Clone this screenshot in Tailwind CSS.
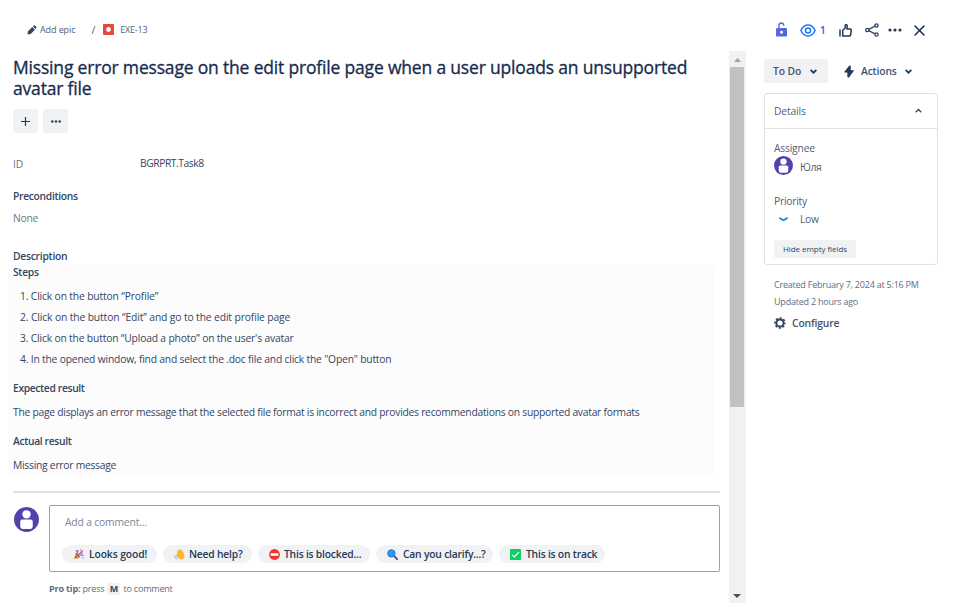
<!DOCTYPE html>
<html lang="en">
<head>
<meta charset="utf-8">
<title>EXE-13</title>
<script src="https://cdn.jsdelivr.net/npm/@tailwindcss/browser@4"></script>
</head>
<body class="bg-white overflow-hidden">
<div class="flex w-[953px] h-[603px] overflow-hidden font-['Open_Sans','Noto_Sans',sans-serif] text-[10.3px] tracking-[-0.25px] leading-4 text-[#344563] whitespace-nowrap">
  <main class="w-[729px] shrink-0 flex flex-col">
    <nav class="h-[50px] pt-[22px] pl-[27px] flex text-[9px] tracking-[-0.1px] text-[#505f79]">
      <svg class="w-[10px] h-[10px] mt-[3px] mr-[3px]" viewBox="0 0 10 10" fill="#344563"><path d="M1 6.2 5.2 2 7.9 4.7 3.7 8.9.5 9.5zM5.9 1.4 7 .5q.5-.4 1 .1l1.2 1.2q.5.5.1 1l-.8 1.2z"/></svg>
      <span>Add epic</span>
      <span class="ml-4 text-[10.5px]">/</span>
      <svg class="w-[11px] h-[11px] ml-[8px] mt-[2px] mr-[6px]" viewBox="0 0 11 11"><rect width="11" height="11" rx="1" fill="#e5493a"/><circle cx="5.5" cy="5.5" r="2.4" fill="#fff"/></svg>
      <span class="tracking-[-0.2px]">EXE-13</span>
    </nav>
    <h1 class="mt-[7px] pl-[13px] text-[17.5px] leading-[21px] tracking-[-0.18px] text-[#172b4d] [-webkit-text-stroke:0.3px_#172b4d]">Missing error message on the edit profile page when a user uploads an unsupported<br>avatar file</h1>
    <div class="flex gap-[5px] pl-[13px] mt-[10px]">
      <button class="w-[25px] h-6 rounded-[2px] bg-[#f1f2f4] grid place-items-center"><svg class="w-[9px] h-[9px]" viewBox="0 0 9 9" stroke="#253858" stroke-width="1.2"><path d="M0 4.5h9M4.5 0v9"/></svg></button>
      <button class="w-[25px] h-6 rounded-[2px] bg-[#f1f2f4] grid place-items-center"><svg class="w-[10px] h-[3px]" viewBox="0 0 10 3" fill="#253858"><circle cx="1.3" cy="1.5" r="1.2"/><circle cx="5" cy="1.5" r="1.2"/><circle cx="8.7" cy="1.5" r="1.2"/></svg></button>
    </div>
    <div class="flex pl-[13px] mt-[22px] h-[17px]"><span class="w-[127px] mt-px text-[#6b778c]">ID</span><span class="tracking-[-0.45px]">BGRPRT.Task8</span></div>
    <h2 class="pl-[13px] mt-4 font-semibold tracking-[-0.3px]">Preconditions</h2>
    <p class="pl-[13px] mt-[6px] text-[#6b778c]">None</p>
    <h2 class="pl-[13px] mt-[22px] font-semibold">Description</h2>
    <section class="ml-2 mt-px w-[706px] h-[210px] bg-[#fcfcfc] pl-[5px] flex flex-col">
      <h3 class="font-semibold leading-[14px] tracking-[-0.3px]">Steps</h3>
      <ol class="mt-[7px] pl-[7px] leading-[21px] tracking-[-0.17px]">
        <li class="tracking-[-0.15px]">1. Click on the button “Profile”</li>
        <li class="tracking-[-0.12px]">2. Click on the button “Edit” and go to the edit profile page</li>
        <li>3. Click on the button “Upload a photo” on the user's avatar</li>
        <li class="tracking-[-0.19px]">4. In the opened window, find and select the .doc file and click the "Open" button</li>
      </ol>
      <h3 class="mt-[10px] font-semibold tracking-[-0.35px]">Expected result</h3>
      <p class="mt-2">The page displays an error message that the selected file format is incorrect and provides recommendations on supported avatar formats</p>
      <h3 class="mt-[13px] font-semibold tracking-[-0.35px]">Actual result</h3>
      <p class="mt-2">Missing error message</p>
    </section>
    <div class="ml-[13px] mt-4 w-[707px] h-[2px] shrink-0 bg-[#dfe1e6]"></div>
    <div class="flex mt-3 pl-[14px]">
      <svg class="w-[25px] h-[25px] mt-[2px] mr-[10px]" viewBox="0 0 24 24"><circle cx="12" cy="12" r="12" fill="#5243aa"/><circle cx="12" cy="7" r="4" fill="#fff"/><path d="M6 14.2q0-2.2 2-2.2h8q2 0 2 2.2v4q0 2.8-2.5 2.8h-7Q6 21 6 18.2z" fill="#fff"/></svg>
      <div class="w-[671px] h-[67px] border border-[#97a0af] rounded-[2px] pl-[12px]">
        <p class="pl-[3px] mt-2 text-[#7a869a] tracking-[-0.15px]">Add a comment...</p>
        <div class="flex gap-[6px] mt-[15px] font-semibold text-[#253858] leading-[18px] tracking-[-0.2px]">
          <span class="w-[95px] h-[18px] rounded-full bg-[#f1f2f4] pl-[11px] flex items-center gap-[5px] tracking-[-0.1px]">
            <svg class="w-[11px] h-[11px]" viewBox="0 0 11 11" fill="none"><path d="M.4 10.6 3.2 3.6q3 1.4 4 4.2z" fill="#eba93b"/><path d="M2 7.4l2.6 2M3 4.6l3.4 3.8" stroke="#8b4a2e" stroke-width="1.1"/><path d="M4.2 5.2 5 1M5.4 6 9.8 1.4" stroke="#e64b7d" stroke-width="1.3"/><path d="M6.6 6.6q1.6-1.4 4 .2M3 1.2l1.2 1.6" stroke="#3d9bf0" stroke-width="1.3"/><path d="M8.2 4.2h1.4M7 1h1M9.4 9h1" stroke="#7a4fc4" stroke-width="1.2"/></svg>Looks good!</span>
          <span class="w-[89px] h-[18px] rounded-full bg-[#f1f2f4] pl-[11px] flex items-center gap-[4px]">
            <svg class="w-[11px] h-[11px]" viewBox="0 0 11 11"><path d="M2.8 4.2 4.2 1q.7-.9 1.3 0l.6-.4q.8-.4 1.1.4l1 .5 1.4 2.2q1.4 2.8.8 4.8-.7 2-3 2-1.6 0-2.8-1.3L2.3 6.8q-.3-.9.6-1z" fill="#fdb62f"/><path d="M.4 6.2Q.3 9 2.8 10.3M1.8 6.8q.1 1.6 1.7 2.4" stroke="#8fc2ee" fill="none"/></svg>Need help?</span>
          <span class="w-[112px] h-[18px] rounded-full bg-[#f1f2f4] pl-[11px] flex items-center gap-[4px]">
            <svg class="w-[11px] h-[11px]" viewBox="0 0 11 11"><circle cx="5.5" cy="5.5" r="5.4" fill="#f92f2f"/><rect x="1.5" y="4.3" width="8" height="2.4" rx=".6" fill="#fff"/></svg>This is blocked...</span>
          <span class="w-[117px] h-[18px] rounded-full bg-[#f1f2f4] pl-[11px] flex items-center gap-[5px]">
            <svg class="w-[11px] h-[11px]" viewBox="0 0 11 11"><path d="M7 7l3.2 3.2" stroke="#6b4fa8" stroke-width="2" stroke-linecap="round"/><circle cx="4.4" cy="4.4" r="3.7" fill="#14a4f2" stroke="#3d6fc0" stroke-width="1"/></svg>Can you clarify...?</span>
          <span class="w-[106px] h-[18px] rounded-full bg-[#f1f2f4] pl-[11px] flex items-center gap-[5px]">
            <svg class="w-[11px] h-[11px]" viewBox="0 0 11 11"><rect width="11" height="11" rx="1" fill="#0bcf63"/><path d="M2.2 5.8 4.4 8 9 3" fill="none" stroke="#fff" stroke-width="1.2"/></svg>This is on track</span>
        </div>
      </div>
    </div>
    <p class="pl-[49px] mt-[9px] text-[9px] tracking-[-0.15px] text-[#5e6c84] flex"><b class="mr-[2px]">Pro tip:</b>press<b class="w-[13px] h-3 mt-[2px] leading-3 mx-[3px] rounded-[2px] text-center bg-[#f1f2f4] text-[#344563]">M</b><span class="tracking-[-0.2px]">to comment</span></p>
  </main>
  <div class="w-[17px] h-[552px] mt-[51px] shrink-0 bg-[#f1f1f1] flex flex-col items-center pr-px">
    <svg class="w-[7px] h-[4px] mt-[7px]" viewBox="0 0 7 4"><path d="M0 4 3.5 0 7 4z" fill="#a3a3a3"/></svg>
    <div class="w-[14px] h-[340px] mt-[5px] bg-[#c1c1c1]"></div>
    <svg class="w-[8px] h-[4px] mt-auto mb-[5px]" viewBox="0 0 8 4"><path d="M0 0h8L4 4z" fill="#505050"/></svg>
  </div>
  <aside class="w-[192px] ml-[18px] flex flex-col items-start">
    <div class="flex items-center h-[18px] mt-[21px] pl-[12px]">
      <svg class="w-[11px] h-[15px] mb-px" viewBox="0 0 11 15"><defs><linearGradient id="lk" x1="0" x2="1"><stop stop-color="#6b63e0"/><stop offset="1" stop-color="#4668dc"/></linearGradient></defs><path d="M3 6.5V3.2Q3 1 5.3 1t2.4 2.2v.6" fill="none" stroke="#5369dc" stroke-width="1.4"/><rect y="6" width="11" height="8.6" rx="1.2" fill="url(#lk)"/><circle cx="5.5" cy="10.2" r="1.5" fill="#fff"/></svg>
      <svg class="w-[16px] h-[13px] ml-[13px]" viewBox="0 0 16 13" fill="none" stroke="#1d7afc" stroke-width="1.5"><path d="M.9 6.5Q3.5 1 8 1t7.1 5.5Q12.5 12 8 12T.9 6.5z"/><circle cx="8" cy="6.5" r="2.5"/></svg>
      <span class="ml-[4px] w-[6px] text-[#1868db] text-[10px] font-semibold">1</span>
      <svg class="w-[13px] h-[13px] ml-[13px]" viewBox="0 0 13 13" fill="none" stroke="#253858" stroke-width="1.5" stroke-linejoin="round"><path d="M1 6v6" stroke-linecap="round"/><path d="M3.7 11.9V6.3L6.2 4V1.5q0-.8.9-.8 1.2 0 1.2 1.5L7.9 4.900h3.400q1 0 .9 1l-.5 4.800q-.1 1.200-1.300 1.200z"/></svg>
      <svg class="w-[14px] h-[14px] ml-[13px]" viewBox="0 0 14 14" fill="none" stroke="#344563" stroke-width="1.4"><circle cx="2.3" cy="7" r="1.600"/><circle cx="11.500" cy="2.500" r="1.600"/><circle cx="11.500" cy="11.500" r="1.600"/><path d="M3.700 6.300l6.300-3.100M3.700 7.700l6.300 3.100"/></svg>
      <svg class="w-[14px] h-[4px] ml-[9px]" viewBox="0 0 14 4" fill="#253858"><circle cx="2" cy="2" r="1.600"/><circle cx="7" cy="2" r="1.600"/><circle cx="12" cy="2" r="1.600"/></svg>
      <svg class="w-[11px] h-[11px] ml-[12px]" viewBox="0 0 11 11" stroke="#172b4d" stroke-width="1.500" stroke-linecap="round"><path d="M1 1l9 9M10 1l-9 9"/></svg>
    </div>
    <div class="flex items-center h-6 mt-5 font-semibold text-[#42526e]">
      <button class="w-16 h-6 rounded-[2px] bg-[#f1f2f4] flex items-center pl-[9px] tracking-[-0.1px]">To Do<svg class="w-[7px] h-[5px] ml-auto mr-[11px]" viewBox="0 0 7 5" fill="none" stroke="#253858" stroke-width="1.800"><path d="M.6.800l2.900 2.900L6.400.800"/></svg></button>
      <svg class="w-[10px] h-[13px] ml-[16px]" viewBox="0 0 10 13" fill="#253858" stroke="#253858" stroke-width="1" stroke-linejoin="round"><path fill-rule="evenodd" d="M5.700.800.700 7.100h3.200v4.900l.8.200L9.400 5.700H6.200V1zM4.500 4.400v1.400h-1.100zM5.500 7h1.200l-1.200 1.700z"/></svg>
      <span class="ml-[7px] w-[36px] tracking-[-0.15px]">Actions</span>
      <svg class="w-[7px] h-[5px] ml-[8px]" viewBox="0 0 7 5" fill="none" stroke="#253858" stroke-width="1.800"><path d="M.6.800l2.900 2.900L6.400.800"/></svg>
    </div>
    <section class="mt-[10px] w-[174px] h-[172px] border border-[#dfe1e6] rounded-[3px] text-[#505f79]">
      <header class="h-[35px] border-b border-[#dfe1e6] pl-[9px] pr-[15px] pb-px flex items-center justify-between tracking-[-0.15px]">Details<svg class="w-[7px] h-[5px]" viewBox="0 0 7 5" fill="none" stroke="#344563" stroke-width="1.300"><path d="M.8 4.200l2.700-2.700 2.700 2.700"/></svg></header>
      <div class="pl-[9px] flex flex-col items-start tracking-[-0.25px]">
        <span class="mt-[11px] tracking-[-0.2px]">Assignee</span>
        <div class="flex items-center h-[19px]">
          <svg class="w-[19px] h-[19px] mr-[7px]" viewBox="0 0 24 24"><circle cx="12" cy="12" r="12" fill="#5243aa"/><circle cx="12" cy="7" r="4" fill="#fff"/><path d="M6 14.200q0-2.200 2-2.200h8q2 0 2 2.200v4q0 2.800-2.500 2.800h-7Q6 21 6 18.200z" fill="#fff"/></svg>
          <span class="mt-[2px] tracking-[-0.4px]">Юля</span>
        </div>
        <span class="mt-[18px]">Priority</span>
        <div class="flex items-center h-4 mt-[2px]">
          <svg class="w-[9px] h-[5px] ml-[5px] mr-[12px]" viewBox="0 0 9 5" fill="none" stroke="#1d7afc" stroke-width="1.800" stroke-linecap="round"><path d="M1 1.200 4.500 3.200 8 1.200"/></svg>Low
        </div>
        <button class="mt-[13px] w-[82px] h-[18px] rounded-[2px] bg-[#f1f2f4] text-[8px] tracking-[-0.06px] text-[#344563]">Hide empty fields</button>
      </div>
    </section>
    <div class="pl-[10px] mt-[11px] text-[9px] leading-[17px] tracking-[-0.22px] text-[#5e6c84]">Created February 7, 2024 at 5:16 PM<br>Updated 2 hours ago</div>
    <div class="pl-[10px] mt-[5px] flex items-center font-semibold text-[#42526e] tracking-[-0.15px]">
      <svg class="w-[12px] h-[12px] mr-[6px] mb-px" viewBox="0 0 12 12" fill="none" stroke="#344563"><circle cx="6" cy="6" r="3.600" stroke-width="2"/><circle cx="6" cy="6" r="5" stroke-width="1.500" stroke-dasharray="2.200 1.727" stroke-dashoffset="1.100"/></svg>
      Configure
    </div>
  </aside>
</div>
</body>
</html>
